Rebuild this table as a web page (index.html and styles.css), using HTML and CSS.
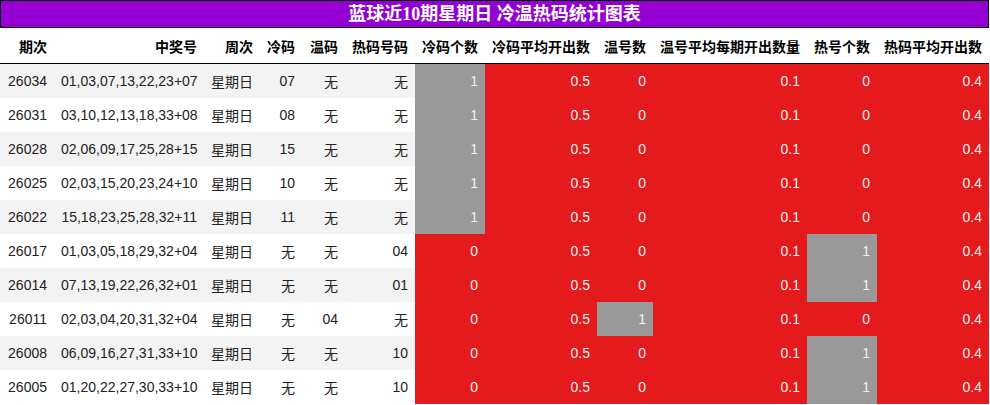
FILE: index.html
```html
<!DOCTYPE html>
<html lang="zh">
<head>
<meta charset="utf-8">
<title>蓝球近10期星期日 冷温热码统计图表</title>
<link rel="stylesheet" href="styles.css">
</head>
<body>
<div class="wrap">
  <div class="title">蓝球近10期星期日 冷温热码统计图表</div>
  <table class="stats">
    <colgroup>
      <col class="w54"><col class="w150"><col class="w56"><col class="w42"><col class="w43"><col class="w70">
      <col class="w70"><col class="w112"><col class="w56"><col class="w154"><col class="w70"><col class="w112">
    </colgroup>
    <thead>
      <tr><th>期次</th><th>中奖号</th><th>周次</th><th>冷码</th><th>温码</th><th>热码号码</th><th>冷码个数</th><th>冷码平均开出数</th><th>温号数</th><th>温号平均每期开出数量</th><th>热号个数</th><th>热码平均开出数</th></tr>
    </thead>
    <tbody>
      <tr><td>26034</td><td>01,03,07,13,22,23+07</td><td>星期日</td><td>07</td><td>无</td><td>无</td><td class="g">1</td><td class="r">0.5</td><td class="r">0</td><td class="r">0.1</td><td class="r">0</td><td class="r">0.4</td></tr>
      <tr><td>26031</td><td>03,10,12,13,18,33+08</td><td>星期日</td><td>08</td><td>无</td><td>无</td><td class="g">1</td><td class="r">0.5</td><td class="r">0</td><td class="r">0.1</td><td class="r">0</td><td class="r">0.4</td></tr>
      <tr><td>26028</td><td>02,06,09,17,25,28+15</td><td>星期日</td><td>15</td><td>无</td><td>无</td><td class="g">1</td><td class="r">0.5</td><td class="r">0</td><td class="r">0.1</td><td class="r">0</td><td class="r">0.4</td></tr>
      <tr><td>26025</td><td>02,03,15,20,23,24+10</td><td>星期日</td><td>10</td><td>无</td><td>无</td><td class="g">1</td><td class="r">0.5</td><td class="r">0</td><td class="r">0.1</td><td class="r">0</td><td class="r">0.4</td></tr>
      <tr><td>26022</td><td>15,18,23,25,28,32+11</td><td>星期日</td><td>11</td><td>无</td><td>无</td><td class="g">1</td><td class="r">0.5</td><td class="r">0</td><td class="r">0.1</td><td class="r">0</td><td class="r">0.4</td></tr>
      <tr><td>26017</td><td>01,03,05,18,29,32+04</td><td>星期日</td><td>无</td><td>无</td><td>04</td><td class="r">0</td><td class="r">0.5</td><td class="r">0</td><td class="r">0.1</td><td class="g">1</td><td class="r">0.4</td></tr>
      <tr><td>26014</td><td>07,13,19,22,26,32+01</td><td>星期日</td><td>无</td><td>无</td><td>01</td><td class="r">0</td><td class="r">0.5</td><td class="r">0</td><td class="r">0.1</td><td class="g">1</td><td class="r">0.4</td></tr>
      <tr><td>26011</td><td>02,03,04,20,31,32+04</td><td>星期日</td><td>无</td><td>04</td><td>无</td><td class="r">0</td><td class="r">0.5</td><td class="g">1</td><td class="r">0.1</td><td class="r">0</td><td class="r">0.4</td></tr>
      <tr><td>26008</td><td>06,09,16,27,31,33+10</td><td>星期日</td><td>无</td><td>无</td><td>10</td><td class="r">0</td><td class="r">0.5</td><td class="r">0</td><td class="r">0.1</td><td class="g">1</td><td class="r">0.4</td></tr>
      <tr><td>26005</td><td>01,20,22,27,30,33+10</td><td>星期日</td><td>无</td><td>无</td><td>10</td><td class="r">0</td><td class="r">0.5</td><td class="r">0</td><td class="r">0.1</td><td class="g">1</td><td class="r">0.4</td></tr>
    </tbody>
  </table>
</div>
</body>
</html>
```

FILE: styles.css
```css
html, body {
  margin: 0;
  padding: 0;
  background: #ffffff;
}

.wrap {
  width: 989px;
}

.title {
  box-sizing: border-box;
  height: 28px;
  border: 1px solid #000;
  background: #9400d3;
  color: #ffffff;
  font-family: "Liberation Serif", "Noto Sans CJK SC", serif;
  font-weight: bold;
  font-size: 18px;
  line-height: 26px;
  text-align: center;
}

.stats {
  width: 989px;
  table-layout: fixed;
  border-collapse: collapse;
  font-family: "Liberation Sans", "Noto Sans CJK SC", sans-serif;
  font-size: 14px;
  color: #222;
}

.w54 { width: 54px; }
.w150 { width: 150px; }
.w56 { width: 56px; }
.w42 { width: 42px; }
.w43 { width: 43px; }
.w70 { width: 70px; }
.w112 { width: 112px; }
.w154 { width: 154px; }

.stats th,
.stats td {
  padding: 0 7px;
  text-align: right;
  vertical-align: middle;
  white-space: nowrap;
  overflow: hidden;
}

.stats th {
  height: 35px;
  font-weight: bold;
  color: #000;
  border-bottom: 1px solid #000;
}

.stats td {
  height: 34px;
}

.stats tbody tr:nth-child(odd) {
  background: #f3f3f3;
}

.stats td.r {
  background: #e41a1c;
  color: #f1f1f1;
}

.stats td.g {
  background: #999999;
  color: #f1f1f1;
}
```
